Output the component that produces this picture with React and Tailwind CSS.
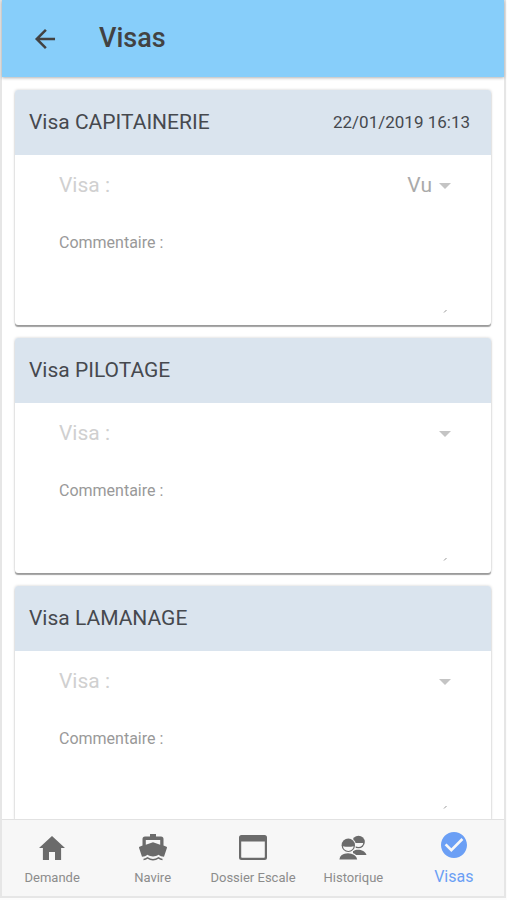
import { IoMdArrowBack, IoMdCheckmarkCircle, IoMdHome } from 'react-icons/io';

const visas = [
  { id: 'capitainerie', title: 'Visa CAPITAINERIE', date: '22/01/2019 16:13', value: 'Vu' },
  { id: 'pilotage', title: 'Visa PILOTAGE', date: '', value: '' },
  { id: 'lamanage', title: 'Visa LAMANAGE', date: '', value: '' },
];

function BoatIcon() {
  return (
    <svg viewBox="0 0 28 28" className="size-7" fill="currentColor" aria-hidden="true">
      <path
        fillRule="evenodd"
        d="M11 0h6v2.500h5A2.500 2.500 0 0 1 24.500 5v6.500l3 1.300c.5.200.6.600.4 1.100L25 22.800c-2.200 0-4-.8-5.500-2-3.300 2.200-7.700 2.200-11 0-1.500 1.200-3.300 2-5.500 2L.1 13.900c-.2-.5-.1-.9.4-1.100l3-1.300V5A2.500 2.500 0 0 1 6 2.500h5zM6.800 6v4.700L14 8.300l7.200 2.400V6z"
      />
      <path
        d="M4.500 25.500c1.500 0 2.800-.6 4-1.600 3.300 2.200 7.700 2.200 11 0 1.200 1 2.500 1.600 4 1.600"
        fill="none"
        stroke="currentColor"
        strokeWidth="1.500"
      />
    </svg>
  );
}

function WindowIcon() {
  return (
    <svg viewBox="0 0 28 26" className="h-[26px] w-7" fill="currentColor" aria-hidden="true">
      <path
        fillRule="evenodd"
        d="M2.500 0h23A2.500 2.500 0 0 1 28 2.500v20a2.500 2.500 0 0 1-2.500 2.500h-23A2.500 2.500 0 0 1 0 22.500v-20A2.500 2.500 0 0 1 2.500 0zM2.200 6.500v15.300c0 .6.4 1 1 1h21.600c.6 0 1-.4 1-1V6.500z"
      />
    </svg>
  );
}

function PeopleIcon() {
  return (
    <svg viewBox="0 0 28 26" className="h-[26px] w-7" aria-hidden="true">
      <path d="M14 20v-4c2-.8 3-1.200 5-1.200 3.500 0 7.500 1.700 8.500 5.200z" fill="currentColor" />
      <circle cx="19.500" cy="7" r="6.300" fill="currentColor" />
      <path d="M14.800 8h9.400a4.700 4 0 0 1-9.400 0z" fill="#f7f7f7" />
      <circle cx="9.300" cy="10.200" r="7.700" fill="#f7f7f7" />
      <path d="M-.3 25c.3-4.800 4.500-7.300 9.300-7.300s9.500 2.500 10 7.300z" fill="currentColor" stroke="#f7f7f7" strokeWidth="1.200" />
      <circle cx="9.300" cy="10.200" r="6.700" fill="currentColor" />
      <path d="M4 11.200c3 .7 7.600.7 10.600 0a5.300 4.700 0 0 1-10.600 0z" fill="#f7f7f7" />
    </svg>
  );
}

const tabs = [
  { label: 'Demande', icon: <IoMdHome className="size-8" /> },
  { label: 'Navire', icon: <BoatIcon /> },
  { label: 'Dossier Escale', icon: <WindowIcon /> },
  { label: 'Historique', icon: <PeopleIcon /> },
  { label: 'Visas', icon: <IoMdCheckmarkCircle className="size-8" />, active: true },
];

function VisaCard({ id, title, date, value }) {
  return (
    <section className="shrink-0 overflow-hidden rounded-[3px] bg-white shadow-[0_2px_1px_rgba(0,0,0,0.35),0_0_3px_rgba(0,0,0,0.2)]">
      <header className="flex h-[65px] items-center justify-between bg-[#dae4ee] pt-px pr-[21px] pl-3.5 text-[#46494e]">
        <h2 className="text-[21px]">{title}</h2>
        {date && <time className="text-[17px]">{date}</time>}
      </header>
      <div className="flex h-[170px] flex-col pr-10 pl-11">
        <div className="flex h-[62px] items-center justify-between">
          <label htmlFor={`${id}-visa`} className="text-[21px] text-[#d0d0d0]">
            Visa :
          </label>
          <div className="flex items-center gap-[7px]">
            <select
              id={`${id}-visa`}
              defaultValue={value}
              disabled
              className="field-sizing-content appearance-none bg-transparent text-[21px] text-[#aaaaaa] opacity-100"
            >
              <option value={value}>{value}</option>
            </select>
            <svg viewBox="0 0 12 6" className="h-1.5 w-3" fill="#c4c4c4" aria-hidden="true">
              <path d="M0 0h12L6 6z" />
            </svg>
          </div>
        </div>
        <label htmlFor={`${id}-commentaire`} className="pt-3.5 text-base text-[#999999]">
          Commentaire :
        </label>
        <div className="flex flex-1 items-end pb-3">
          <textarea
            id={`${id}-commentaire`}
            disabled
            className="h-11 min-w-0 flex-1 resize-none bg-transparent text-base text-[#999999]"
          />
          <svg viewBox="0 0 8 4" className="h-1 w-2" stroke="#999999" aria-hidden="true">
            <path d="M1 3.500 3.500 1" />
          </svg>
        </div>
      </div>
    </section>
  );
}

export default function App() {
  return (
    <div className="h-screen bg-[#fcfcfc] pr-px pb-0.5 font-['Roboto','Liberation_Sans',sans-serif]">
      <div className="flex h-full flex-col border-x-2 border-b-2 border-[#e6e6e6] bg-white">
        <header className="z-10 flex h-[77px] shrink-0 items-center gap-[39px] bg-[#87cefa] pl-7 text-[#424242] shadow-[0_1px_3px_rgba(0,0,0,0.3)]">
          <button type="button" aria-label="Retour">
            <IoMdArrowBack className="size-[30px]" />
          </button>
          <h1 className="text-[27px] font-medium">Visas</h1>
        </header>
        <main className="flex min-h-0 flex-1 flex-col gap-[13px] overflow-hidden px-[13px] pt-[13px]">
          {visas.map((visa) => (
            <VisaCard key={visa.id} {...visa} />
          ))}
        </main>
        <nav className="z-10 grid h-[77px] shrink-0 grid-cols-5 border-t border-[#e2e2e2] bg-[#f7f7f7]">
          {tabs.map(({ label, icon, active }) => (
            <a
              key={label}
              href="#"
              aria-current={active ? 'page' : undefined}
              className={
                active
                  ? 'flex flex-col items-center pt-[9px] text-base text-[#6b9ff5]'
                  : 'flex flex-col items-center pt-3 text-[13px] text-[#8c8c8c]'
              }
            >
              <span
                className={
                  active
                    ? 'flex h-8 items-center justify-center'
                    : 'flex h-8 items-center justify-center text-[#6b6b6b]'
                }
              >
                {icon}
              </span>
              <span className="pt-1 whitespace-nowrap">{label}</span>
            </a>
          ))}
        </nav>
      </div>
    </div>
  );
}
